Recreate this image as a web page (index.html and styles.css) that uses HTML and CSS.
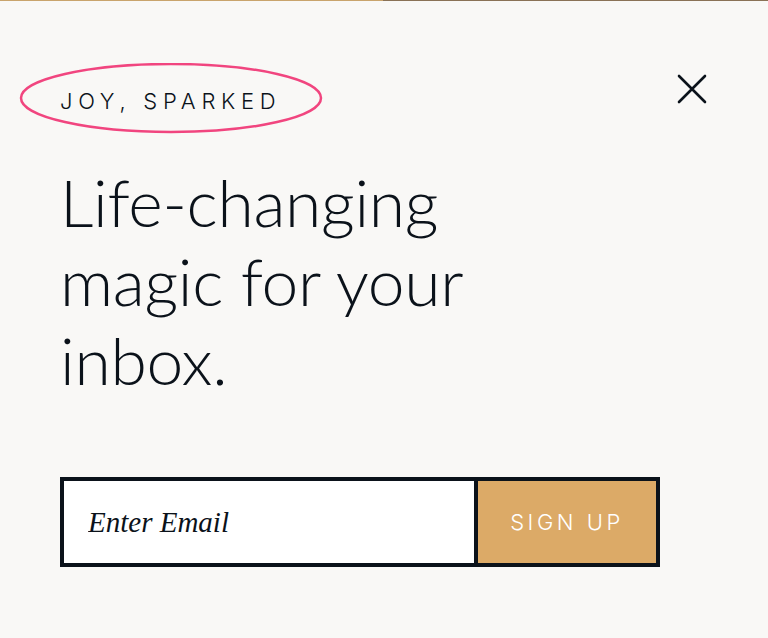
FILE: index.html
```html
<!DOCTYPE html>
<html lang="en">
<head>
    <meta charset="UTF-8">
    <meta name="viewport" content="width=device-width, initial-scale=1.0">
    <title>Joy, Sparked - Newsletter</title>
    <link rel="stylesheet" href="styles.css">
</head>
<body>

    <div class="progress"><div class="progress-fill"></div></div>

    <div class="modal">
        <div class="modal-top">
            <div class="tagline">
                <svg class="tagline-ring" width="306" height="74" viewBox="0 0 306 74">
                    <ellipse cx="152" cy="35" rx="150" ry="34" fill="none" stroke="#f1457f" stroke-width="2.5"/>
                </svg>
                <span>JOY, SPARKED</span>
            </div>
            <button class="close" aria-label="Close">
                <svg width="30" height="30" viewBox="0 0 30 30">
                    <path d="M2 2 L28 28 M28 2 L2 28" stroke="#0b121a" stroke-width="2.6" stroke-linecap="round"/>
                </svg>
            </button>
        </div>

        <h1>Life-changing<br>magic for your<br>inbox.</h1>

        <form class="signup" id="signupForm">
            <input type="email" placeholder="Enter Email">
            <button type="submit">SIGN UP</button>
        </form>
    </div>

</body>
</html>
```

FILE: styles.css
```css
body { margin: 0; background: #f9f8f6; font-family: Inter, "Noto Sans", sans-serif; color: #0b121a; }
.progress { height: 1px; background: #8a7256; }
.progress-fill { width: 383px; height: 1px; background: #c9a46c; }
.modal { padding: 62px 0 0 60px; }
.modal-top { display: flex; justify-content: space-between; align-items: flex-start; padding-right: 61px; }
.tagline { position: relative; padding-top: 28px; font-size: 22px; font-weight: 300; letter-spacing: 0.26em; line-height: 20px; }
.tagline-ring { position: absolute; left: -41px; top: 0; }
.close { background: none; border: none; padding: 0; margin-top: 11px; cursor: pointer; }
.close svg { display: block; }
h1 { font-family: Lato, "Noto Sans", sans-serif; font-weight: 300; font-size: 66px; line-height: 79px; margin: 51px 0 0; letter-spacing: -0.3px; }
.signup { display: flex; width: 600px; height: 90px; box-sizing: border-box; border: 4px solid #0b121a; margin-top: 78px; }
.signup input { flex: 1; border: none; border-right: 4px solid #0b121a; padding: 0 24px; font-family: "Liberation Serif", serif; font-style: italic; font-size: 29px; color: #0b121a; background: #fff; outline: none; }
.signup input::placeholder { color: #0b121a; }
.signup button { width: 178px; border: none; background: #dcaa67; color: #fff; font-family: Inter, sans-serif; font-size: 22px; font-weight: 300; letter-spacing: 0.16em; cursor: pointer; }
```
